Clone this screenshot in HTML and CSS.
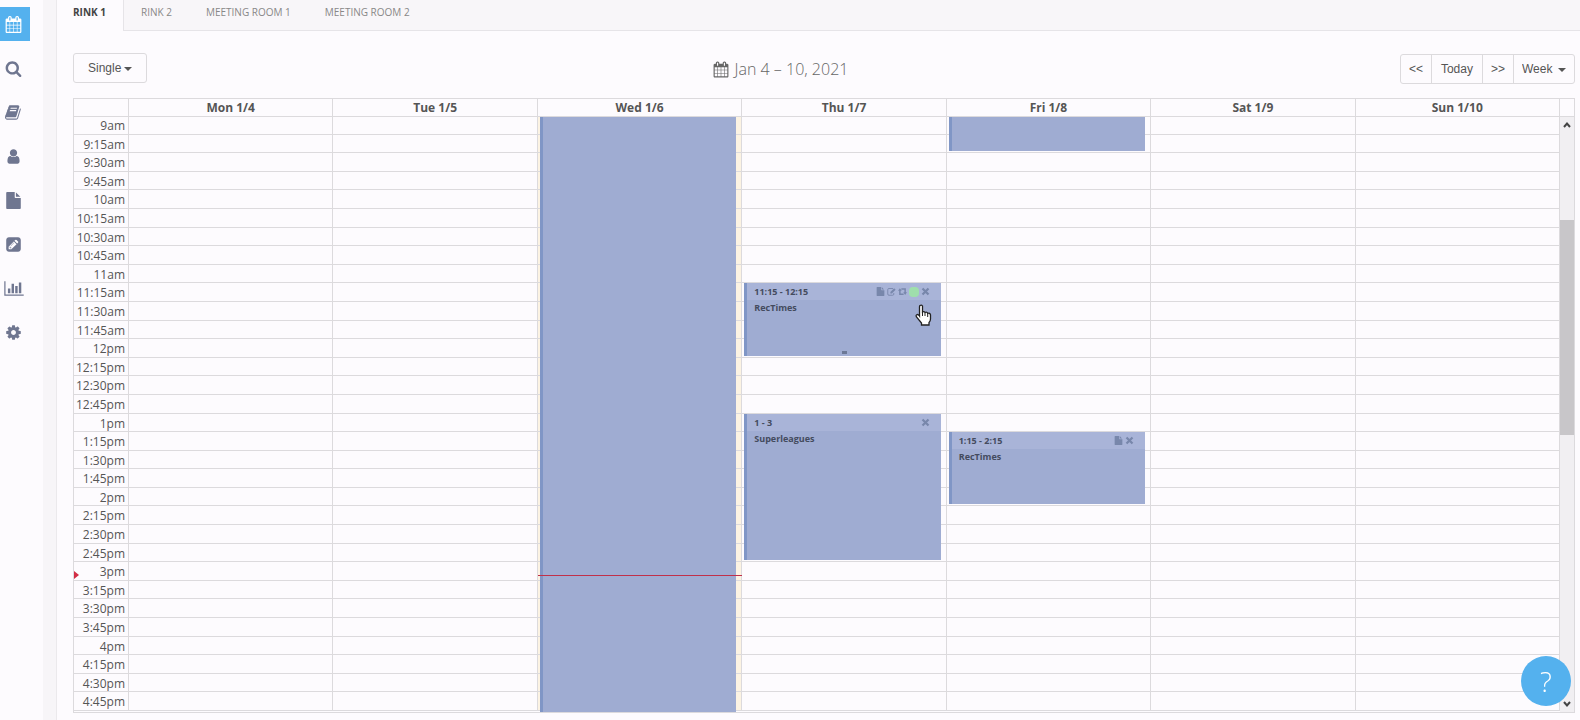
FILE: index.html
```
<!DOCTYPE html>
<html lang="en">
<head>
    <meta charset="UTF-8">
    <meta name="viewport" content="width=device-width, initial-scale=1.0">
    <title>Schedule - Rink 1</title>
    <link rel="stylesheet" href="styles.css">
</head>
<body>
    <!-- Icon sprite -->
    <svg class="sprite" aria-hidden="true">
        <symbol id="calendar" viewBox="0 0 1792 1792"><path d="M192 1664h288v-288h-288v288zm352 0h320v-288h-320v288zm-352-352h288v-320h-288v320zm352 0h320v-320h-320v320zm-352-384h288v-288h-288v288zm736 736h320v-288h-320v288zm-384-736h320v-288h-320v288zm768 736h288v-288h-288v288zm-384-352h320v-320h-320v320zm-352-864v-288q0-13-9.500-22.500t-22.500-9.500h-64q-13 0-22.500 9.500t-9.500 22.500v288q0 13 9.500 22.500t22.500 9.500h64q13 0 22.500-9.500t9.500-22.500zm736 864h288v-320h-288v320zm-384-384h320v-288h-320v288zm384 0h288v-288h-288v288zm32-480v-288q0-13-9.500-22.500t-22.500-9.500h-64q-13 0-22.500 9.500t-9.500 22.500v288q0 13 9.500 22.500t22.500 9.500h64q13 0 22.500-9.500t9.500-22.500zm384-64v1280q0 52-38 90t-90 38h-1408q-52 0-90-38t-38-90v-1280q0-52 38-90t90-38h128v-96q0-66 47-113t113-47h64q66 0 113 47t47 113v96h384v-96q0-66 47-113t113-47h64q66 0 113 47t47 113v96h128q52 0 90 38t38 90z"/></symbol>
        <symbol id="search" viewBox="0 0 1792 1792"><path d="M1216 832q0-185-131.500-316.500t-316.500-131.500-316.500 131.500-131.500 316.500 131.500 316.500 316.500 131.500 316.500-131.500 131.500-316.500zm512 832q0 52-38 90t-90 38q-54 0-90-38l-343-342q-179 124-399 124-143 0-273.500-55.500t-225-150-150-225-55.500-273.500 55.500-273.500 150-225 225-150 273.500-55.500 273.500 55.500 225 150 150 225 55.500 273.500q0 220-124 399l343 343q37 37 37 90z"/></symbol>
        <symbol id="book" viewBox="0 0 1792 1792"><path d="M1639 478q40 57 18 129l-275 906q-19 64-76.500 107.500t-122.500 43.500h-923q-77 0-148.500-53.500t-99.500-131.500q-24-67-2-127 0-4 3-27t4-37q1-8-3-21.500t-3-19.500q2-11 8-21t16.500-23.500 16.500-23.500q23-38 45-91.500t30-91.500q3-10 .5-30t-.5-28q3-11 17-28t17-23q21-36 42-92t25-90q1-9-2.500-32t.5-28q4-13 22-30.500t22-22.500q19-26 42.500-84.500t27.500-96.500q1-8-3-25.500t-2-26.500q2-8 9-18t18-23 17-21q8-12 16.500-30.500t15-35 16-36 19.500-32 26.500-23.500 36-11.500 47.500 5.500l-1 3q38-9 51-9h761q74 0 114 56t18 130l-274 906q-36 119-71.500 153.500t-128.500 34.500h-869q-27 0-38 15-11 16-1 43 24 70 144 70h923q29 0 56-15.500t35-41.500l300-987q7-22 5-57 38 15 59 43zm-1064 2q-4 13 2 22.500t20 9.500h608q13 0 25.500-9.500t16.500-22.500l21-64q4-13-2-22.500t-20-9.500h-608q-13 0-25.500 9.500t-16.500 22.500zm-83 256q-4 13 2 22.500t20 9.500h608q13 0 25.500-9.500t16.500-22.500l21-64q4-13-2-22.500t-20-9.500h-608q-13 0-25.500 9.500t-16.500 22.500z"/></symbol>
        <symbol id="user" viewBox="0 0 1792 1792"><path d="M1536 1399q0 109-62.500 187t-150.500 78h-854q-88 0-150.500-78t-62.500-187q0-85 8.500-160.500t31.500-152 58.500-131 94-89 134.500-34.500q131 128 313 128t313-128q76 0 134.500 34.500t94 89 58.500 131 31.500 152 8.500 160.500zm-256-887q0 159-112.500 271.500t-271.500 112.500-271.500-112.500-112.500-271.500 112.500-271.500 271.500-112.500 271.500 112.500 112.500 271.500z"/></symbol>
        <symbol id="file" viewBox="0 0 1792 1792"><path d="M1152 512v-472q22 14 36 28l408 408q14 14 28 36h-472zm-128 32q0 40 28 68t68 28h544v1056q0 40-28 68t-68 28h-1344q-40 0-68-28t-28-68v-1600q0-40 28-68t68-28h800v544z"/></symbol>
        <symbol id="pencil" viewBox="0 0 1536 1792"><path d="M404 1108l152 152-52 52h-56v-96h-96v-56zm414-390q14 13-3 30l-291 291q-17 17-30 3-14-13 3-30l291-291q17-17 30-3zm-274 690l544-544-288-288-544 544v288h288zm608-608l92-92q28-28 28-68t-28-68l-152-152q-28-28-68-28t-68 28l-92 92zm384-384v960q0 119-84.500 203.500t-203.500 84.500h-960q-119 0-203.500-84.500t-84.500-203.500v-960q0-119 84.500-203.500t203.500-84.500h960q119 0 203.500 84.500t84.500 203.500z"/></symbol>
        <symbol id="chart" viewBox="0 0 2048 1792"><path d="M640 896v512h-256v-512h256zm384-512v1024h-256v-1024h256zm1024 1152v128h-2048v-1536h128v1408h1920zm-640-896v768h-256v-768h256zm384-384v1152h-256v-1152h256z"/></symbol>
        <symbol id="cog" viewBox="0 0 1792 1792"><path d="M1152 896q0-106-75-181t-181-75-181 75-75 181 75 181 181 75 181-75 75-181zm512-109v222q0 12-8 23t-20 13l-185 28q-19 54-39 91 35 50 107 138 10 12 10 25t-9 23q-27 37-99 108t-94 71q-12 0-26-9l-138-108q-44 23-91 38-16 136-29 186-7 28-36 28h-222q-14 0-24.500-8.500t-11.500-21.500l-28-184q-49-16-90-37l-141 107q-10 9-25 9-14 0-25-11-126-114-165-168-7-10-7-23 0-12 8-23 15-21 51-66.500t54-70.500q-27-50-41-99l-183-27q-13-2-21-12.500t-8-23.500v-222q0-12 8-23t19-13l186-28q14-46 39-92-40-57-107-138-10-12-10-24 0-10 9-23 26-36 98.500-107.500t94.500-71.500q13 0 26 10l138 107q44-23 91-38 16-136 29-186 7-28 36-28h222q14 0 24.500 8.500t11.500 21.500l28 184q49 16 90 37l142-107q9-9 24-9 13 0 25 10 129 119 165 170 7 8 7 22 0 12-8 23-15 21-51 66.500t-54 70.500q26 50 41 98l183 28q13 2 21 12.500t8 23.500z"/></symbol>
        <symbol id="edit" viewBox="0 0 12 12"><path d="M8 2H2.500Q1 2 1 3.500v6Q1 11 2.500 11h5Q9 11 9 9.500V8" fill="none" stroke="currentColor" stroke-width="1.200"/><path d="M4.500 8.500V6.500L9.500 1.500l2 2-5 5z"/></symbol>
        <symbol id="repeat" viewBox="0 0 12 12"><path d="M2.500 4v5.500h5M9.500 8V2.500h-5" fill="none" stroke="currentColor" stroke-width="2"/><path d="M0 5l2.500-3.500L5 5zM7 7h5L9.500 10.500z"/></symbol>
        <symbol id="times" viewBox="0 0 12 12"><path d="M2 2l8 8M10 2l-8 8" fill="none" stroke="currentColor" stroke-width="3"/></symbol>
        <symbol id="up" viewBox="0 0 10 10"><path d="M2 7l3-3.500L8 7" fill="none" stroke="currentColor" stroke-width="2"/></symbol>
        <symbol id="down" viewBox="0 0 10 10"><path d="M2 3l3 3.500L8 3" fill="none" stroke="currentColor" stroke-width="2"/></symbol>
    </svg>

    <nav class="sidebar">
        <a class="current" href="#schedule" aria-label="Schedule"><svg><use href="#calendar"/></svg></a>
        <a href="#search" aria-label="Search"><svg><use href="#search"/></svg></a>
        <a href="#bookings" aria-label="Bookings"><svg><use href="#book"/></svg></a>
        <a href="#customers" aria-label="Customers"><svg><use href="#user"/></svg></a>
        <a href="#documents" aria-label="Documents"><svg><use href="#file"/></svg></a>
        <a href="#edit" aria-label="Edit"><svg><use href="#pencil"/></svg></a>
        <a href="#reports" aria-label="Reports"><svg class="wide"><use href="#chart"/></svg></a>
        <a href="#settings" aria-label="Settings"><svg><use href="#cog"/></svg></a>
    </nav>

    <main>
        <nav class="tabs">
            <a class="current" href="#rink1">RINK 1</a>
            <a href="#rink2">RINK 2</a>
            <a href="#room1">MEETING ROOM 1</a>
            <a href="#room2">MEETING ROOM 2</a>
        </nav>

        <div class="toolbar">
            <div class="dropdown single">
                <select aria-label="Booking mode">
                    <option>Single</option>
                </select>
            </div>
            <h1><svg><use href="#calendar"/></svg>Jan 4 – 10, 2021</h1>
            <div class="btn-group">
                <button class="step" type="button">&lt;&lt;</button>
                <button type="button">Today</button>
                <button class="step" type="button">&gt;&gt;</button>
                <div class="dropdown">
                    <select aria-label="View">
                        <option>Week</option>
                    </select>
                </div>
            </div>
        </div>

        <div class="calendar">
            <div class="days">
                <span></span>
                <span>Mon 1/4</span>
                <span>Tue 1/5</span>
                <span>Wed 1/6</span>
                <span>Thu 1/7</span>
                <span>Fri 1/8</span>
                <span>Sat 1/9</span>
                <span>Sun 1/10</span>
                <span></span>
            </div>
            <div class="scroller">
                <div class="grid">
                    <table aria-label="Time slots">
                        <tbody id="slots">
                            <!-- Rows are added by the script -->
                        </tbody>
                    </table>
                    <div class="events">
                        <div class="now-arrow"></div>
                        <div class="event wed"></div>
                        <div class="now-line"></div>
                        <div class="event thu-am">
                            <div class="event-head">
                                <span>11:15 - 12:15</span>
                                <button type="button" aria-label="Document"><svg><use href="#file"/></svg></button>
                                <button type="button" aria-label="Edit"><svg><use href="#edit"/></svg></button>
                                <button type="button" aria-label="Repeat"><svg><use href="#repeat"/></svg></button>
                                <i class="dot"></i>
                                <button type="button" aria-label="Delete"><svg><use href="#times"/></svg></button>
                            </div>
                            <p>RecTimes</p>
                            <i class="resizer"></i>
                            <svg class="hand" viewBox="0 0 17 22"><path d="M5 1.500Q6.500.5 7.500 2V8Q9 7 10 8.500 12 7.500 12.700 9.500 15 8.500 15.500 11V15Q15.500 17 14 18.500V21H6.500V19L1.500 13Q.5 11 2.200 10.500 3.500 10.500 4.500 12V3Q4.500 2 5 1.500z" fill="#fff" stroke="#222" stroke-width="1.300"/><path d="M7.500 8v4M10 9v3M12.700 10v3" stroke="#222"/></svg>
                        </div>
                        <div class="event thu-pm">
                            <div class="event-head">
                                <span>1 - 3</span>
                                <button type="button" aria-label="Delete"><svg><use href="#times"/></svg></button>
                            </div>
                            <p>Superleagues</p>
                        </div>
                        <div class="event fri-am"></div>
                        <div class="event fri-pm">
                            <div class="event-head">
                                <span>1:15 - 2:15</span>
                                <button type="button" aria-label="Document"><svg><use href="#file"/></svg></button>
                                <button type="button" aria-label="Delete"><svg><use href="#times"/></svg></button>
                            </div>
                            <p>RecTimes</p>
                        </div>
                    </div>
                </div>
                <div class="scrollbar">
                    <svg><use href="#up"/></svg>
                    <div class="thumb"></div>
                    <svg><use href="#down"/></svg>
                </div>
            </div>
        </div>
    </main>

    <button class="help" type="button">?</button>

    <script>
        // Quarter hour rows from 9am to 4:45pm
        const slots = document.getElementById('slots');
        for (let minutes = 9 * 60; minutes < 17 * 60; minutes += 15) {
            const hour = Math.floor(minutes / 60);
            const rest = minutes % 60;
            const row = slots.insertRow();
            const label = document.createElement('th');
            label.scope = 'row';
            label.textContent = ((hour + 11) % 12 + 1) + (rest ? ':' + rest : '') + (hour < 12 ? 'am' : 'pm');
            row.appendChild(label);
            for (let day = 0; day < 7; day++) {
                row.insertCell();
            }
        }
    </script>
</body>
</html>
```
FILE: styles.css
```
* {
    box-sizing: border-box;
}
body {
    display: flex;
    height: 100vh;
    margin: 0;
    background: #fdfbfe;
    color: #555;
    font-family: "Open Sans", "Noto Sans", sans-serif;
    font-size: 12px;
    overflow: hidden;
}
svg {
    fill: currentColor;
}
a {
    color: inherit;
    text-decoration: none;
}
.sprite {
    display: none;
}

/* Sidebar */
.sidebar {
    display: flex;
    flex-direction: column;
    gap: 10px;
    width: 43px;
    padding-top: 7px;
    flex-shrink: 0;
    color: #6f7690;
}
.sidebar a {
    display: flex;
    align-items: center;
    justify-content: center;
    width: 30px;
    height: 34px;
    padding-right: 3px;
}
.sidebar .current {
    background: #54b1ee;
    color: #fff;
}
.sidebar svg {
    width: 17px;
    height: 17px;
}
.sidebar .wide {
    width: 20px;
    flex-shrink: 0;
}

/* Content */
main {
    display: flex;
    flex-direction: column;
    flex: 1;
    min-width: 0;
    border-left: 13px solid #f7f5f8;
    box-shadow: inset 1px 0 #ebe9ec;
}
.tabs {
    display: flex;
    height: 31px;
    flex-shrink: 0;
    margin-left: 1px;
    font-size: 10px;
    line-height: 24px;
    color: #888;
}
.tabs a {
    padding: 0 17px;
    background: #f8f6f9;
    border-bottom: 1px solid #e6e4e8;
}
.tabs a:last-child {
    flex: 1;
}
.tabs .current {
    padding-left: 16px;
    background: none;
    border-bottom: 0;
    border-right: 1px solid #e6e4e8;
    color: #444;
    font-weight: bold;
}
.toolbar {
    display: flex;
    align-items: center;
    justify-content: space-between;
    height: 67px;
    flex-shrink: 0;
    padding: 0 5px 0 17px;
    padding-top: 9px;
}
.toolbar h1 {
    display: flex;
    align-items: center;
    gap: 6px;
    margin: 0 0 0 14px;
    font-size: 16px;
    font-weight: 300;
    color: #666;
}
.toolbar h1 svg {
    width: 16px;
    height: 17px;
}
.toolbar button, .toolbar select {
    height: 28px;
    margin: 0;
    padding: 0 9px;
    border: 0;
    background: none;
    color: #555;
    font-family: "Liberation Sans", Arial, sans-serif;
    font-size: 12px;
    appearance: none;
}
.toolbar select {
    width: 60px;
    padding: 0 8px;
}
.btn-group {
    display: flex;
    border: 1px solid #dcdadd;
    border-radius: 3px;
}
.btn-group button {
    border-right: 1px solid #dcdadd;
}
.btn-group .step {
    padding: 0 8px;
}
.dropdown {
    position: relative;
}
.dropdown::after {
    content: "";
    position: absolute;
    top: 13px;
    right: 8px;
    border: 4px solid transparent;
    border-top-color: #555;
    border-bottom: 0;
    pointer-events: none;
}
.single {
    margin-bottom: 3px;
    border: 1px solid #dcdadd;
    border-radius: 3px;
}
.toolbar .single select {
    width: 72px;
    padding: 0 14px;
}
.single::after {
    right: 14px;
}

/* Week grid */
.calendar {
    display: flex;
    flex-direction: column;
    flex: 1;
    min-height: 0;
    margin: 0 5px 7px 17px;
    border: 1px solid #dcdadd;
}
.days {
    display: grid;
    grid-template-columns: 55px repeat(7, 1fr) 14px;
    border-bottom: 1px solid #dcdadd;
    font-weight: bold;
    line-height: 16px;
    text-align: center;
}
.days span {
    padding-top: 1px;
    border-right: 1px solid #dcdadd;
}
.days span:last-child {
    border: 0;
}
.scroller {
    display: flex;
    flex: 1;
    min-height: 0;
    overflow: hidden;
}
.grid {
    position: relative;
    display: flex;
    flex: 1;
    margin: -1px 0 1px;
}
table {
    display: block;
    flex: 1;
}
tbody {
    display: grid;
    grid-template-rows: repeat(32, 1fr);
    height: 100%;
}
tr {
    display: grid;
    grid-template-columns: 55px repeat(7, 1fr);
    min-height: 0;
}
th, td {
    min-height: 0;
    padding: 0;
    border-right: 1px solid #dcdadd;
    border-bottom: 1px solid #dcdadd;
}
th {
    padding-right: 3px;
    font-weight: normal;
    line-height: 19px;
    text-align: right;
}
td:nth-child(4) {
    background: #fcf3e3;
}

/* Events lie over the slots, on the same tracks */
.events {
    position: absolute;
    inset: 0;
    display: grid;
    grid-template-columns: 55px repeat(7, 1fr);
    grid-template-rows: repeat(32, 1fr);
}
.event {
    position: relative;
    min-height: 0;
    margin: 0 6px 2px 2px;
    background: #9facd2;
    border-left: 3px solid #8096c6;
    color: #444b5e;
    font-size: 9px;
    font-weight: bold;
}
.wed {
    grid-area: 1 / 4 / 33 / 5;
    margin-bottom: -1px;
}
.thu-am {
    grid-area: 10 / 5 / 14 / 6;
}
.thu-pm {
    grid-area: 17 / 5 / 25 / 6;
}
.fri-am {
    grid-area: 1 / 6 / 3 / 7;
}
.fri-pm {
    grid-area: 18 / 6 / 22 / 7;
}
.event-head {
    display: flex;
    align-items: center;
    gap: 2px;
    height: 17px;
    padding: 0 11px 0 7px;
    background: #a9b4d8;
}
.event-head span {
    flex: 1;
}
.event-head button {
    display: flex;
    padding: 0;
    border: 0;
    background: none;
    color: #7887ab;
}
.event-head svg {
    width: 9px;
    height: 9px;
}
.dot {
    width: 10px;
    height: 10px;
    border-radius: 4px;
    background: #9fdfac;
}
.event p {
    margin: 0;
    padding-left: 7px;
    line-height: 16px;
}
.resizer {
    position: absolute;
    bottom: 2px;
    left: 49%;
    width: 5px;
    height: 3px;
    background: #6c7896;
}
.hand {
    position: absolute;
    top: 21px;
    right: 9px;
    width: 17px;
    height: 22px;
}
.now-line {
    z-index: 1;
    grid-area: 25 / 4 / 26 / 5;
    height: 1px;
    margin-top: 13px;
    background: #c0304a;
}
.now-arrow {
    grid-area: 25 / 1 / 26 / 2;
    justify-self: start;
    height: 8px;
    margin-top: 9px;
    border: 4px solid transparent;
    border-left: 5px solid #d22d45;
    border-right: 0;
}

/* Scrollbar */
.scrollbar {
    display: grid;
    grid-template-rows: 16px 87fr 216fr 261fr 16px;
    justify-items: center;
    align-items: center;
    width: 14px;
    background: #f1eff2;
    color: #444;
}
.scrollbar svg {
    width: 10px;
    height: 10px;
}
.scrollbar .thumb {
    grid-row: 3;
    width: 100%;
    height: 100%;
    background: #c8c6c9;
}
.scrollbar svg:last-child {
    grid-row: 5;
}

/* Help */
.help {
    position: fixed;
    right: 9px;
    bottom: 14px;
    z-index: 2;
    width: 50px;
    height: 50px;
    padding: 0;
    border: 0;
    border-radius: 50%;
    background: #54b1ee;
    color: #fff;
    font-family: "Open Sans", "Noto Sans", sans-serif;
    font-size: 28px;
    font-weight: 300;
}
```
